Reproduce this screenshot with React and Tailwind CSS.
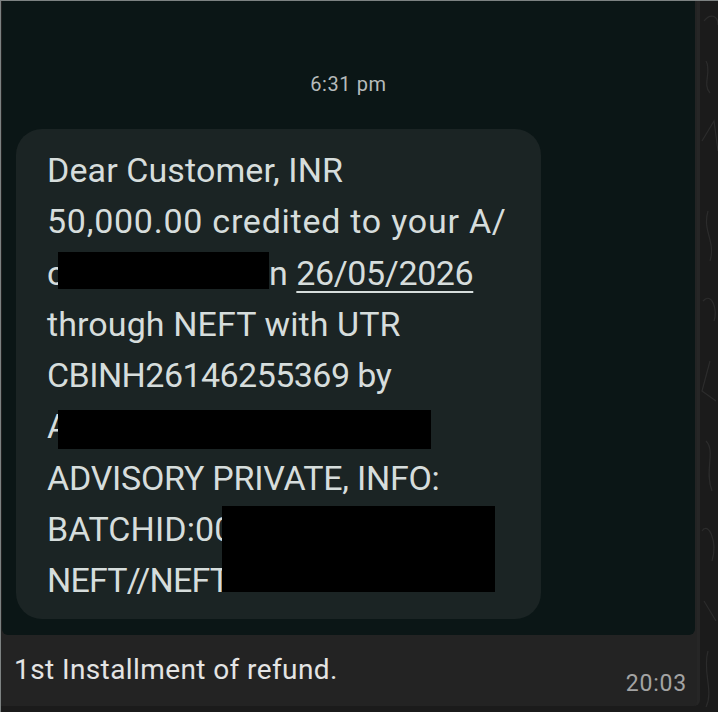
import React from "react";

const font = { fontFamily: "Roboto, 'Noto Sans', sans-serif" };

function Redaction({ className }) {
  return <div className={`absolute bg-black ${className}`} />;
}

function SmsBubble() {
  return (
    <div className="relative ml-[14px] mt-[34px] w-[525px] h-[490px] rounded-[26px] bg-[#1b2424] pl-[31px] pt-[16px] text-[34px] leading-[51.25px] text-[#d6dddc] tracking-[0.1px]">
      <div className="whitespace-nowrap">Dear Customer, INR</div>
      <div className="whitespace-nowrap tracking-[0.75px]">50,000.00 credited to your A/</div>
      <div className="whitespace-nowrap">
        <span>c</span>
        <span className="inline-block w-[204px]" />
        <span>n </span>
        <span className="underline decoration-2 underline-offset-[6px] tracking-[-0.4px]">26/05/2026</span>
      </div>
      <div className="whitespace-nowrap">through NEFT with UTR</div>
      <div className="whitespace-nowrap tracking-[-0.55px]">CBINH26146255369 by</div>
      <div className="whitespace-nowrap">A</div>
      <div className="whitespace-nowrap tracking-[-0.25px]">ADVISORY PRIVATE, INFO:</div>
      <div className="whitespace-nowrap">BATCHID:00</div>
      <div className="whitespace-nowrap tracking-[-0.8px]">NEFT//NEFT</div>

      <Redaction className="left-[42px] top-[123px] w-[211px] h-[37px]" />
      <Redaction className="left-[42px] top-[281px] w-[373px] h-[39px]" />
      <Redaction className="left-[206px] top-[377px] w-[273px] h-[86px]" />
    </div>
  );
}

function Wallpaper() {
  return (
    <svg width="18" height="712" viewBox="0 0 18 712" className="block">
      <g fill="none" stroke="#2c2c2c" strokeWidth="1.2">
        <path d="M4 20 C10 12 18 14 18 24" />
        <path d="M6 60 C12 70 2 84 10 92" />
        <path d="M2 140 L14 120 L18 150" />
        <path d="M8 210 C2 230 16 240 10 260" />
        <path d="M3 300 C12 290 18 310 14 320" />
        <path d="M10 360 L2 390 L16 400" />
        <path d="M6 440 C16 450 4 470 12 490" />
        <path d="M2 530 C8 520 18 540 12 560" />
        <path d="M4 600 L16 620" />
        <path d="M8 650 C2 670 14 690 6 706" />
      </g>
    </svg>
  );
}

export default function App() {
  return (
    <div
      className="w-[718px] h-[712px] overflow-hidden bg-[#1b1b1b] border-t border-l border-[#7d8282] flex"
      style={font}
    >
      <div className="w-[699px] h-[705px] bg-[#232323] border-r-[3px] border-[#262626] rounded-br-[6px] flex flex-col">
        <div className="ml-[1px] w-[693px] h-[634px] bg-[#0b1616] rounded-b-[6px] flex flex-col">
          <div className="mt-[72px] text-center text-[20px] leading-[22px] tracking-[0.6px] text-[#b6bbbb]">6:31 pm</div>
          <SmsBubble />
        </div>
        <div className="flex items-end justify-between pl-[13px] pr-[10px] pt-[18px]">
          <span className="text-[28px] leading-[34px] tracking-[0.4px] text-[#e4e4e4]">1st Installment of refund.</span>
          <span className="text-[23px] leading-[26px] tracking-[0.8px] text-[#a3a3a3] translate-y-[10px]">20:03</span>
        </div>
      </div>
      <div className="flex-1">
        <Wallpaper />
      </div>
    </div>
  );
}
